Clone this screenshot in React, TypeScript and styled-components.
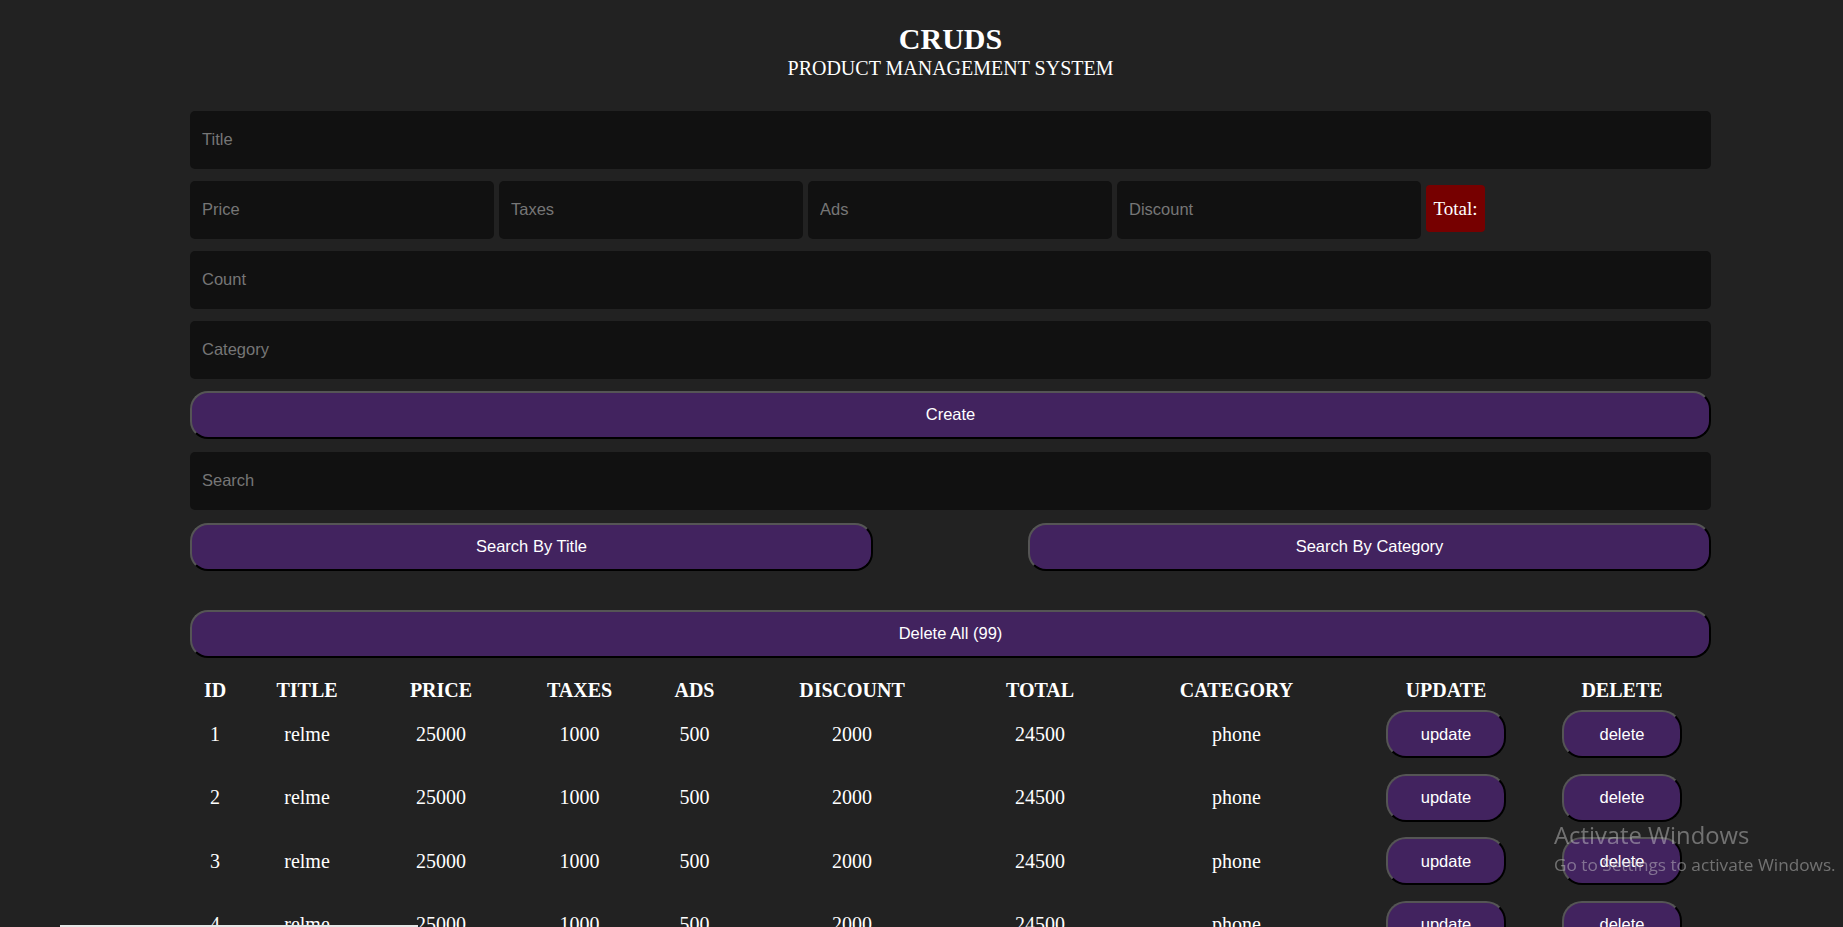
import React from "react";
import styled, { createGlobalStyle } from "styled-components";

const Global = createGlobalStyle`
  html, body {
    margin: 0;
    padding: 0;
    background: #222222;
    overflow: hidden;
  }
  body {
    color: #ffffff;
    font-family: "Liberation Serif", "Times New Roman", serif;
  }
  * { box-sizing: border-box; }
`;

const Page = styled.div`
  width: 1843px;
  height: 927px;
  overflow: hidden;
  position: relative;
`;

const Container = styled.div`
  width: 1521px;
  margin-left: 190px;
`;

const Head = styled.header`
  text-align: center;
  padding-top: 22px;
`;

const Title = styled.h2`
  margin: 0;
  font-size: 30px;
  font-weight: bold;
  line-height: 34.5px;
`;

const Subtitle = styled.p`
  margin: 0;
  font-size: 20px;
  line-height: 23px;
`;

const Form = styled.div`
  margin-top: 31px;
  display: flex;
  flex-direction: column;
`;

const Input = styled.input<{ $w?: string; $mt?: number }>`
  display: block;
  width: ${(p) => p.$w ?? "100%"};
  height: 58px;
  margin-top: ${(p) => p.$mt ?? 0}px;
  background: #111111;
  border: none;
  outline: none;
  border-radius: 5px;
  padding: 0 12px;
  color: #ffffff;
  font-family: "Liberation Sans", Arial, sans-serif;
  font-size: 16.5px;
  &::placeholder {
    color: #767676;
  }
`;

const PriceRow = styled.div`
  display: flex;
  align-items: center;
  gap: 5px;
  margin-top: 12px;
`;

const TotalBox = styled.small`
  display: inline-block;
  background: #760000;
  border-radius: 4px;
  height: 47px;
  line-height: 48px;
  padding: 0 7.5px;
  margin-top: -3px;
  font-size: 19px;
  color: #ffffff;
  font-family: "Liberation Serif", "Times New Roman", serif;
`;

const Button = styled.button<{ $mt?: number; $w?: string }>`
  display: block;
  width: ${(p) => p.$w ?? "100%"};
  height: 48px;
  margin-top: ${(p) => p.$mt ?? 0}px;
  background: #42235f;
  color: #ffffff;
  border-style: solid;
  border-width: 2px;
  border-color: #555555 #000000 #000000 #555555;
  border-radius: 18px;
  font-family: "Liberation Sans", Arial, sans-serif;
  font-size: 16.5px;
  cursor: pointer;
`;

const SearchRow = styled.div`
  display: flex;
  justify-content: space-between;
  margin-top: 13px;
`;

const Table = styled.table`
  width: 1521px;
  table-layout: fixed;
  border-collapse: collapse;
  margin-top: 21px;
  text-align: center;
`;

const Th = styled.th`
  padding: 0;
  height: 24px;
  line-height: 23px;
  font-size: 20px;
  font-weight: bold;
  text-transform: uppercase;
`;

const Tr = styled.tr`
  height: 63.5px;
`;

const Td = styled.td`
  padding: 0;
  font-size: 20px;
  vertical-align: middle;
`;

const RowButton = styled(Button)`
  width: 120px;
  margin: 0 auto;
  border-radius: 20px;
`;

const Watermark = styled.div`
  position: fixed;
  left: 1554px;
  top: 820px;
  color: rgba(210, 210, 210, 0.45);
  font-family: "Open Sans", "Noto Sans", sans-serif;
  pointer-events: none;
`;

const WmTitle = styled.div`
  font-size: 23.8px;
  line-height: 31px;
`;

const WmText = styled.div`
  margin-top: 2px;
  font-size: 17.2px;
  line-height: 24px;
`;

const TaskLine = styled.div`
  position: fixed;
  left: 60px;
  top: 925px;
  width: 358px;
  height: 2px;
  background: #e6e6e6;
`;

const cols = [50, 134, 134, 143, 87, 228, 148, 245, 174, 178];
const headers = ["ID", "TITLE", "PRICE", "TAXES", "ADS", "DISCOUNT", "TOTAL", "CATEGORY", "UPDATE", "DELETE"];

const rows = Array.from({ length: 4 }, (_, i) => ({
  id: i + 1,
  title: "relme",
  price: 25000,
  taxes: 1000,
  ads: 500,
  discount: 2000,
  total: 24500,
  category: "phone",
}));

export default function App() {
  return (
    <>
      <Global />
      <Page>
        <Container>
          <Head>
            <Title>CRUDS</Title>
            <Subtitle>PRODUCT MANAGEMENT SYSTEM</Subtitle>
          </Head>
          <Form>
            <Input placeholder="Title" />
            <PriceRow>
              <Input $w="304px" placeholder="Price" />
              <Input $w="304px" placeholder="Taxes" />
              <Input $w="304px" placeholder="Ads" />
              <Input $w="304px" placeholder="Discount" />
              <TotalBox>Total:</TotalBox>
            </PriceRow>
            <Input $mt={12} placeholder="Count" />
            <Input $mt={12} placeholder="Category" />
            <Button $mt={12}>Create</Button>
            <Input $mt={13} placeholder="Search" />
            <SearchRow>
              <Button $w="683px">Search By Title</Button>
              <Button $w="683px">Search By Category</Button>
            </SearchRow>
            <Button $mt={39}>Delete All (99)</Button>
          </Form>
          <Table>
            <colgroup>
              {cols.map((w, i) => (
                <col key={i} style={{ width: w }} />
              ))}
            </colgroup>
            <thead>
              <tr>
                {headers.map((h) => (
                  <Th key={h}>{h}</Th>
                ))}
              </tr>
            </thead>
            <tbody>
              {rows.map((r) => (
                <Tr key={r.id}>
                  <Td>{r.id}</Td>
                  <Td>{r.title}</Td>
                  <Td>{r.price}</Td>
                  <Td>{r.taxes}</Td>
                  <Td>{r.ads}</Td>
                  <Td>{r.discount}</Td>
                  <Td>{r.total}</Td>
                  <Td>{r.category}</Td>
                  <Td>
                    <RowButton>update</RowButton>
                  </Td>
                  <Td>
                    <RowButton>delete</RowButton>
                  </Td>
                </Tr>
              ))}
            </tbody>
          </Table>
        </Container>
        <Watermark>
          <WmTitle>Activate Windows</WmTitle>
          <WmText>Go to Settings to activate Windows.</WmText>
        </Watermark>
        <TaskLine />
      </Page>
    </>
  );
}
